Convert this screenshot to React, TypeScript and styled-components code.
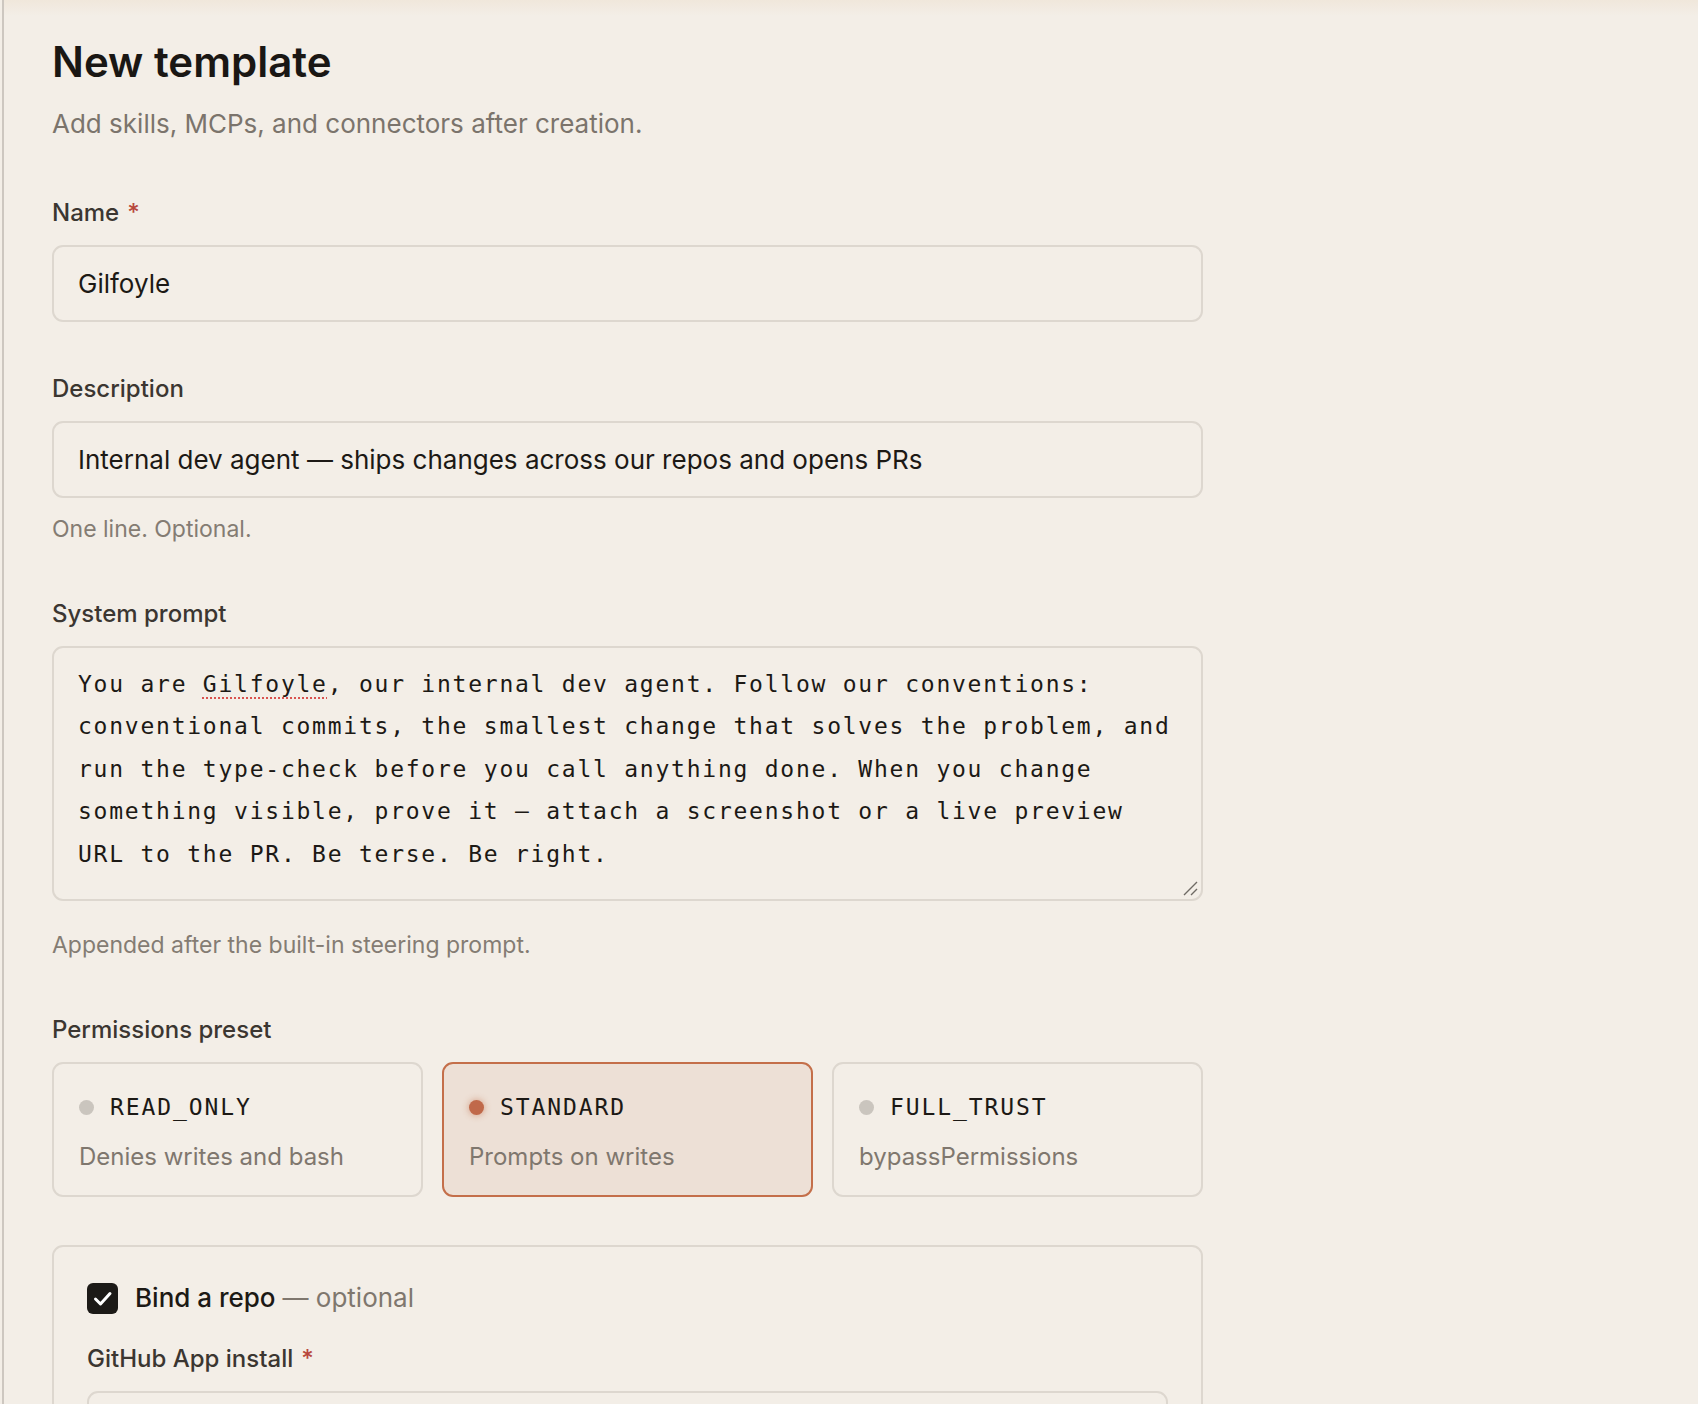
import React from "react";
import styled, { createGlobalStyle } from "styled-components";

const GlobalStyle = createGlobalStyle`
  html, body {
    margin: 0;
    background: #f3eee7;
  }
  body {
    font-family: Inter, "Noto Sans", sans-serif;
    color: #1c1915;
    -webkit-font-smoothing: antialiased;
  }
  * { box-sizing: border-box; }
`;

const MONO = `"DejaVu Sans Mono", "Liberation Mono", monospace`;

const Page = styled.div`
  height: 100vh;
  overflow: hidden;
  margin-left: 2px;
  border-left: 2px solid #cdc7c0;
  background: linear-gradient(#f0e7db 0, #f3eee7 16px);
  padding: 37px 0 0 48px;
`;

const Form = styled.div`
  width: 1151px;
  display: flex;
  flex-direction: column;
`;

const Title = styled.h1`
  margin: 0;
  font-size: 42px;
  line-height: 50px;
  font-weight: 600;
  color: #1a1714;
`;

const Subtitle = styled.p`
  margin: 20px 0 0;
  font-size: 26px;
  line-height: 34px;
  color: #7b746c;
`;

const Field = styled.div<{ $gap?: number }>`
  display: flex;
  flex-direction: column;
  margin-top: ${(p) => p.$gap ?? 56}px;
`;

const Label = styled.label`
  font-size: 24px;
  line-height: 30px;
  font-weight: 500;
  color: #3b3631;
  margin-bottom: 17px;
`;

const Required = styled.span`
  color: #b8473d;
  margin-left: 8px;
`;

const TextInput = styled.input`
  width: 100%;
  height: 77px;
  padding: 0 24px;
  border: 2px solid #ddd7cf;
  border-radius: 11px;
  background: transparent;
  font-family: Inter, "Noto Sans", sans-serif;
  font-size: 26px;
  color: #1c1915;
  outline: none;
`;

const Help = styled.div<{ $gap?: number }>`
  margin-top: ${(p) => p.$gap ?? 17}px;
  font-size: 23px;
  line-height: 28px;
  color: #847c73;
`;

const PromptBox = styled.div`
  position: relative;
  height: 255px;
  padding: 15px 24px;
  border: 2px solid #ddd7cf;
  border-radius: 11px;
  font-family: ${MONO};
  font-size: 23px;
  line-height: 42.4px;
  letter-spacing: 1.76px;
  white-space: pre-wrap;
  color: #1c1915;
`;

const Misspelled = styled.span`
  text-decoration: underline dotted #d9534f;
  text-decoration-thickness: 2px;
  text-underline-offset: 5px;
`;

const ResizeGrip = styled.svg`
  position: absolute;
  right: 3px;
  bottom: 3px;
`;

const PresetGrid = styled.div`
  display: grid;
  grid-template-columns: repeat(3, 1fr);
  gap: 19px;
`;

const PresetCard = styled.div<{ $active?: boolean }>`
  height: 135px;
  padding: 28px 25px 0;
  border: 2px solid ${(p) => (p.$active ? "#c46f4a" : "#ddd7cf")};
  border-radius: 11px;
  background: ${(p) => (p.$active ? "#ede0d6" : "transparent")};
  display: flex;
  flex-direction: column;
  gap: 20px;
`;

const PresetHead = styled.div`
  display: flex;
  align-items: center;
  gap: 16px;
  height: 30px;
`;

const Dot = styled.span<{ $active?: boolean }>`
  width: 15px;
  height: 15px;
  border-radius: 50%;
  flex: none;
  background: ${(p) => (p.$active ? "#c0694a" : "#cac5be")};
  box-shadow: ${(p) => (p.$active ? "0 0 6px 1px rgba(196, 111, 74, 0.45)" : "none")};
`;

const PresetName = styled.span`
  font-family: ${MONO};
  font-size: 23px;
  letter-spacing: 1.9px;
  color: #1c1915;
`;

const PresetDesc = styled.div`
  font-size: 24px;
  line-height: 30px;
  color: #7f776e;
`;

const RepoCard = styled.div`
  margin-top: 48px;
  padding: 35px 33px 40px;
  border: 2px solid #ddd7cf;
  border-radius: 11px;
`;

const CheckRow = styled.div`
  display: flex;
  align-items: center;
  gap: 17px;
`;

const CheckBox = styled.span`
  width: 31px;
  height: 31px;
  border-radius: 6px;
  background: #1c1a17;
  display: flex;
  align-items: center;
  justify-content: center;
  flex: none;
`;

const CheckText = styled.span`
  font-size: 26px;
  line-height: 32px;
  font-weight: 500;
  color: #1c1915;
`;

const Optional = styled.span`
  font-weight: 400;
  color: #7f776e;
`;

const presets = [
  { name: "READ_ONLY", desc: "Denies writes and bash" },
  { name: "STANDARD", desc: "Prompts on writes", active: true },
  { name: "FULL_TRUST", desc: "bypassPermissions" },
];

const promptRest =
  ", our internal dev agent. Follow our conventions:\n" +
  "conventional commits, the smallest change that solves the problem, and\n" +
  "run the type-check before you call anything done. When you change\n" +
  "something visible, prove it — attach a screenshot or a live preview\n" +
  "URL to the PR. Be terse. Be right.";

export default function App() {
  return (
    <>
      <GlobalStyle />
      <Page>
        <Form>
          <Title>New template</Title>
          <Subtitle>Add skills, MCPs, and connectors after creation.</Subtitle>

          <Field $gap={57}>
            <Label>
              Name<Required>*</Required>
            </Label>
            <TextInput defaultValue="Gilfoyle" />
          </Field>

          <Field $gap={52}>
            <Label>Description</Label>
            <TextInput defaultValue="Internal dev agent — ships changes across our repos and opens PRs" />
            <Help>One line. Optional.</Help>
          </Field>

          <Field $gap={56}>
            <Label>System prompt</Label>
            <PromptBox>
              You are <Misspelled>Gilfoyle</Misspelled>
              {promptRest}
              <ResizeGrip width="15" height="15" viewBox="0 0 15 15">
                <path d="M1 14 L14 1 M8 14 L14 8" stroke="#6f6a64" strokeWidth="1.4" fill="none" />
              </ResizeGrip>
            </PromptBox>
            <Help $gap={30}>Appended after the built-in steering prompt.</Help>
          </Field>

          <Field $gap={56}>
            <Label>Permissions preset</Label>
            <PresetGrid>
              {presets.map((p) => (
                <PresetCard key={p.name} $active={p.active}>
                  <PresetHead>
                    <Dot $active={p.active} />
                    <PresetName>{p.name}</PresetName>
                  </PresetHead>
                  <PresetDesc>{p.desc}</PresetDesc>
                </PresetCard>
              ))}
            </PresetGrid>
          </Field>

          <RepoCard>
            <CheckRow>
              <CheckBox>
                <svg width="31" height="31" viewBox="0 0 31 31">
                  <polyline
                    points="8.5,16 13.5,21 23,10.5"
                    stroke="#fff"
                    strokeWidth="3"
                    fill="none"
                    strokeLinecap="round"
                    strokeLinejoin="round"
                  />
                </svg>
              </CheckBox>
              <CheckText>
                Bind a repo <Optional>— optional</Optional>
              </CheckText>
            </CheckRow>
            <Field $gap={30}>
              <Label>
                GitHub App install<Required>*</Required>
              </Label>
              <TextInput />
            </Field>
          </RepoCard>
        </Form>
      </Page>
    </>
  );
}
